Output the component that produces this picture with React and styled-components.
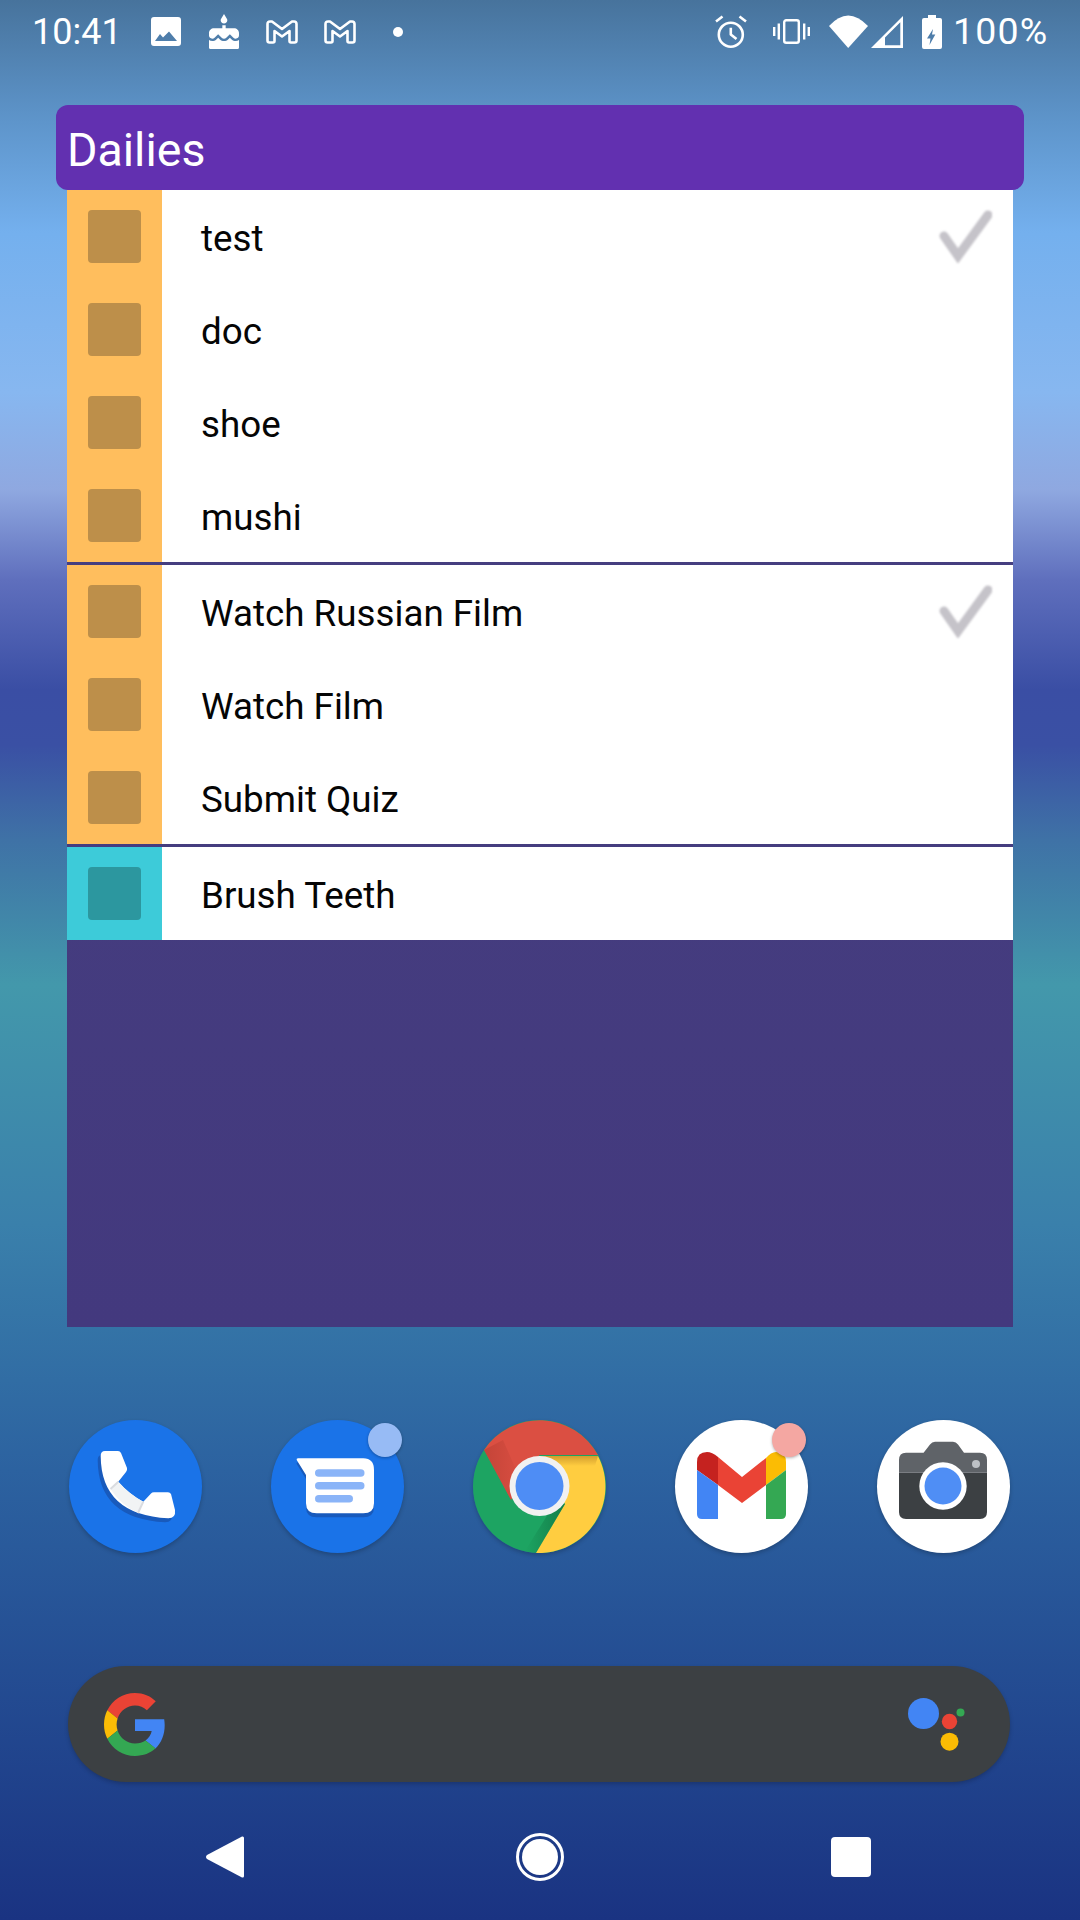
import styled, { createGlobalStyle } from "styled-components";

const GlobalStyle = createGlobalStyle`
  html, body {
    margin: 0;
    padding: 0;
  }
  body {
    font-family: Roboto, "Liberation Sans", sans-serif;
  }
`;

const Screen = styled.div`
  width: 1080px;
  height: 1920px;
  overflow: hidden;
  display: flex;
  flex-direction: column;
  background: linear-gradient(
    180deg,
    #47739c 0,
    #5e95cb 122px,
    #74b0ee 233px,
    #87b7f0 392px,
    #8fa8e0 490px,
    #5f6fbd 580px,
    #3a4ea4 690px,
    #3a50a4 745px,
    #3f72a6 840px,
    #4398ab 985px,
    #3a80ab 1224px,
    #2c62a0 1470px,
    #1a3382 1920px
  );
`;

const StatusBar = styled.div`
  height: 63px;
  padding: 0 33px 0 32px;
  display: flex;
  align-items: center;
  color: #fff;
`;

const StatusText = styled.span`
  font-size: ${(p) => p.$size}px;
  letter-spacing: ${(p) => p.$track || 0}px;
  margin-left: ${(p) => p.$gap || 0}px;
  width: ${(p) => p.$width}px;
  line-height: 1;
  white-space: nowrap;
`;

const StatusIcon = styled.svg`
  display: block;
  flex: none;
  fill: #fff;
  margin-left: ${(p) => p.$gap || 0}px;
`;

const LineIcon = styled(StatusIcon)`
  fill: none;
  stroke: #fff;
  stroke-width: 2.6;
  stroke-linejoin: round;
`;

const Spacer = styled.div`
  flex: 1;
`;

const Widget = styled.section`
  margin: 42px 56px 0;
`;

const WidgetHeader = styled.h1`
  margin: 0;
  height: 85px;
  padding: 4px 0 0 11px;
  box-sizing: border-box;
  display: flex;
  align-items: center;
  background: #6230b0;
  border-radius: 12px;
  color: #fff;
  font-size: 46.5px;
  font-weight: 400;
`;

const TaskPanel = styled.div`
  margin: 0 11px;
  height: 1137px;
  background: linear-gradient(180deg, #474180, #43397e);
`;

const TaskGroup = styled.ul`
  list-style: none;
  margin: 0 0 3px;
  padding: 0;
`;

const TaskRow = styled.li`
  height: 93px;
  display: flex;
  align-items: center;
  background: #fff;
`;

const Stripe = styled.div`
  width: 95px;
  height: 100%;
  flex: none;
  display: flex;
  align-items: center;
  padding-left: 21px;
  box-sizing: border-box;
  background: ${(p) => (p.$tone === "teal" ? "#3dcbd9" : "#ffbe5d")};
`;

const Box = styled.div`
  width: 53px;
  height: 53px;
  border-radius: 4px;
  background: ${(p) => (p.$tone === "teal" ? "#2c979f" : "#bd8f4a")};
`;

const TaskName = styled.span`
  margin-left: 39px;
  padding-top: 3px;
  flex: 1;
  font-size: 36.75px;
  color: #050505;
`;

const Check = styled.svg`
  width: 53px;
  height: 53px;
  margin-right: 21px;
  fill: none;
  stroke: #c5c3c9;
  stroke-width: 9;
  stroke-linecap: round;
  filter: blur(0.8px);
`;

const Dock = styled.div`
  margin: 93px 70px 0 69px;
  display: flex;
  justify-content: space-between;
`;

const AppIcon = styled.div`
  position: relative;
  width: 133px;
  height: 133px;
  border-radius: 50%;
  background: ${(p) => p.$bg};
  box-shadow: 0 2px 4px rgba(0, 0, 0, 0.22);

  svg {
    display: block;
  }
`;

const Badge = styled.span`
  position: absolute;
  top: 3px;
  right: 2px;
  width: 34px;
  height: 34px;
  border-radius: 50%;
  background: ${(p) => p.$color};
  box-shadow: 0 1px 3px rgba(0, 0, 0, 0.3);
`;

const SearchBar = styled.div`
  margin: 113px 70px 0 68px;
  height: 116px;
  padding: 0 44px 0 36px;
  display: flex;
  align-items: center;
  justify-content: space-between;
  border-radius: 58px;
  background: #3c4043;
  box-shadow: 0 2px 4px rgba(0, 0, 0, 0.2);
`;

const NavBar = styled.nav`
  margin-top: 12px;
  height: 126px;
  padding-left: 206px;
  display: flex;
  align-items: center;
`;

const HomeButton = styled.div`
  width: 48px;
  height: 48px;
  margin-left: 272px;
  box-sizing: border-box;
  border: 3px solid #fff;
  border-radius: 50%;
  padding: 3px;

  &::after {
    content: "";
    display: block;
    width: 100%;
    height: 100%;
    border-radius: 50%;
    background: #fff;
  }
`;

const RecentsButton = styled.div`
  width: 40px;
  height: 40px;
  margin-left: 267px;
  border-radius: 4px;
  background: #fff;
`;

const handset =
  "M36 31H49Q51 31 52 33L58 48Q58.5 50.5 57 52L49.3 61.7Q60 74 74.3 81.7L82 73.5Q83 72.3 85 72.3H99Q101 72.3 102 74L106 90Q107 98.3 99.3 98.3Q32 95 31.7 36Q31.7 31 36 31Z";

const PhoneGlyph = () => (
  <svg width="133" height="133" viewBox="0 0 133 133">
    <path d={handset} fill="#185abc" transform="translate(-3 4)" />
    <path d={handset} fill="#fff" />
    <path d="M41.5 69L49.3 61.7Q60 74 74.3 81.7L69 93Q52 85 41.5 69Z" fill="#f1f3f4" />
    <path d="M41.5 69L49.3 61.7M74.3 81.7L69 93" stroke="#dadce0" strokeWidth="2" />
  </svg>
);

const bubble =
  "M27 38.3H92.3Q103 38.3 103 50V83.3Q103 93.3 92.3 93.3H45.7Q35 93.3 35 83.3V55L25.7 40Q25.2 38.3 27 38.3Z";

const MessagesGlyph = () => (
  <svg width="133" height="133" viewBox="0 0 133 133">
    <path d={bubble} fill="#185abc" transform="translate(0 4)" />
    <path d={bubble} fill="#fff" />
    <g fill="#8ab4f8">
      <rect x="44" y="49.3" width="49.5" height="7.5" rx="3.75" />
      <rect x="44" y="62" width="49.5" height="7.5" rx="3.75" />
      <rect x="44" y="75" width="38" height="7.5" rx="3.75" />
    </g>
  </svg>
);

const ChromeGlyph = () => (
  <svg width="133" height="133" viewBox="0 0 133 133">
    <defs>
      <linearGradient id="redShade" x1="0" y1="0" x2="1" y2="0">
        <stop offset="0" stopColor="#8f2c22" stopOpacity="0.3" />
        <stop offset="1" stopColor="#8f2c22" stopOpacity="0" />
      </linearGradient>
      <linearGradient id="yellowShade" x1="0" y1="0" x2="0" y2="1">
        <stop offset="0" stopColor="#a8701c" stopOpacity="0.5" />
        <stop offset="1" stopColor="#a8701c" stopOpacity="0" />
      </linearGradient>
      <linearGradient id="greenShade" x1="1" y1="0" x2="0" y2="0">
        <stop offset="0" stopColor="#0b5f35" stopOpacity="0.55" />
        <stop offset="1" stopColor="#0b5f35" stopOpacity="0" />
      </linearGradient>
    </defs>
    <circle cx="66.5" cy="66.5" r="66.5" fill="#1da462" />
    <path d="M11 30A66.5 66.5 0 0 1 125 35H66.5L38 80Z" fill="#db4f42" />
    <path d="M66.5 36H125A66.5 66.5 0 0 1 63 133L92 84Z" fill="#ffcd40" />
    <path d="M11 30L38 80L52 70L30 20Z" fill="url(#redShade)" />
    <path d="M66.5 36H125L122 46H80Z" fill="url(#yellowShade)" />
    <path d="M92 84L63 133L52 131L80 86Z" fill="url(#greenShade)" />
    <circle cx="66.5" cy="66" r="30" fill="#f1f1f1" />
    <circle cx="66.5" cy="66" r="24" fill="#4e8df5" />
  </svg>
);

const GmailGlyph = () => (
  <svg width="133" height="133" viewBox="0 0 133 133">
    <path d="M43 37L67 57L91 38V65L67 83L43 65Z" fill="#ea4335" />
    <path d="M22 50V42Q22 32 32 32Q37 32 43 37V65Z" fill="#c5221f" />
    <path d="M91 38Q96 32 101 32Q111 32 111 42V50L91 65Z" fill="#fbbc04" />
    <path d="M22 50L43 65V99H27Q22 99 22 94Z" fill="#4285f4" />
    <path d="M91 65L111 50V94Q111 99 106 99H91Z" fill="#34a853" />
  </svg>
);

const CameraGlyph = () => (
  <svg width="133" height="133" viewBox="0 0 133 133">
    <path d="M22 52.7H110V92Q110 99 103 99H29Q22 99 22 92Z" fill="#3c4043" />
    <path
      d="M22 52.7V40Q22 32.7 29 32.7H46.6L53 24.5Q55 21.7 58 21.7H76Q79 21.7 81 24.5L87 32.7H103Q110 32.7 110 40V52.7Z"
      fill="#5f6368"
    />
    <circle cx="66" cy="66" r="23.7" fill="#fff" />
    <circle cx="66" cy="66" r="18.5" fill="#4f8ef5" />
    <circle cx="99" cy="44" r="4" fill="#bdc1c6" />
  </svg>
);

const GoogleLogo = () => (
  <svg width="62" height="63" viewBox="0 0 48 48" preserveAspectRatio="none">
    <path
      fill="#ea4335"
      d="M24 9.5c3.54 0 6.71 1.22 9.21 3.6l6.85-6.85C35.9 2.38 30.47 0 24 0 14.62 0 6.51 5.38 2.56 13.22l7.98 6.19C12.43 13.72 17.74 9.5 24 9.5z"
    />
    <path
      fill="#4285f4"
      d="M46.98 24.55c0-1.57-.15-3.09-.38-4.55H24v9.02h12.94c-.58 2.96-2.26 5.48-4.78 7.18l7.73 6c4.51-4.18 7.09-10.36 7.09-17.65z"
    />
    <path
      fill="#fbbc05"
      d="M10.53 28.59c-.5-1.45-.78-2.99-.78-4.59s.27-3.14.78-4.59l-7.98-6.19C.92 16.46 0 20.12 0 24c0 3.88.92 7.54 2.56 10.78l7.97-6.19z"
    />
    <path
      fill="#34a853"
      d="M24 48c6.48 0 11.93-2.13 15.89-5.81l-7.73-6c-2.15 1.45-4.92 2.3-8.16 2.3-6.26 0-11.57-4.22-13.47-9.91l-7.98 6.19C6.51 42.62 14.62 48 24 48z"
    />
  </svg>
);

const AssistantLogo = () => (
  <svg width="58" height="53" viewBox="0 0 58 53">
    <circle cx="15.5" cy="15.5" r="15.5" fill="#4285f4" />
    <circle cx="41.5" cy="23.5" r="7.7" fill="#ea4335" />
    <circle cx="41.5" cy="43.7" r="9" fill="#fbbc04" />
    <circle cx="52.5" cy="14.5" r="4" fill="#34a853" />
  </svg>
);

const GmailNotice = ({ gap }) => (
  <LineIcon $gap={gap} width="32" height="24" viewBox="0 0 32 24">
    <path d="M1.5 20.5V4Q1.5 1.5 4 1.5H6L16 9L26 1.5H28Q30.5 1.5 30.5 4V20.5Q30.5 22.5 28.5 22.5H25Q23.5 22.5 23.5 21V11L16 16.5L8.5 11V21Q8.5 22.5 7 22.5H3.5Q1.5 22.5 1.5 20.5Z" />
  </LineIcon>
);

const groups = [
  {
    tone: "orange",
    tasks: [
      { name: "test", done: true },
      { name: "doc" },
      { name: "shoe" },
      { name: "mushi" },
    ],
  },
  {
    tone: "orange",
    tasks: [
      { name: "Watch Russian Film", done: true },
      { name: "Watch Film" },
      { name: "Submit Quiz" },
    ],
  },
  { tone: "teal", tasks: [{ name: "Brush Teeth" }] },
];

export default function App() {
  return (
    <Screen>
      <GlobalStyle />
      <StatusBar>
        <StatusText $size={36} $width={87}>10:41</StatusText>
        <StatusIcon $gap={32} width="30" height="29" viewBox="0 0 30 29">
          <path
            fillRule="evenodd"
            d="M3 0H27Q30 0 30 3V26Q30 29 27 29H3Q0 29 0 26V3Q0 0 3 0ZM4 24L9 17L12 20.5L18 14.5L26 24Z"
          />
        </StatusIcon>
        <StatusIcon $gap={28} width="30" height="35" viewBox="3 0 18 22" preserveAspectRatio="none">
          <path d="M12 6c1.11 0 2-.9 2-2 0-.38-.1-.73-.29-1.03L12 0l-1.71 2.97c-.19.3-.29.65-.29 1.03 0 1.1.9 2 2 2zm4.6 9.99l-1.07-1.07-1.08 1.07c-1.3 1.3-3.58 1.31-4.89 0l-1.07-1.07-1.09 1.07C6.75 16.64 5.88 17 4.96 17c-.73 0-1.4-.23-1.96-.61V21c0 .55.45 1 1 1h16c.55 0 1-.45 1-1v-4.61c-.56.38-1.23.61-1.96.61-.92 0-1.79-.36-2.44-1.01zM18 9h-5V7h-2v2H6c-1.66 0-3 1.34-3 3v1.54c0 1.08.88 1.96 1.96 1.96.52 0 1.02-.2 1.38-.57l2.14-2.13 2.13 2.13c.74.74 2.03.74 2.77 0l2.14-2.13 2.13 2.13c.37.37.86.57 1.38.57 1.08 0 1.96-.88 1.96-1.96V12C21 10.34 19.66 9 18 9z" />
        </StatusIcon>
        <GmailNotice gap={27} />
        <GmailNotice gap={26} />
        <StatusIcon $gap={37} width="10" height="10" viewBox="0 0 10 10">
          <circle cx="5" cy="5" r="5" />
        </StatusIcon>
        <Spacer />
        <LineIcon width="32" height="33" viewBox="0 0 32 33">
          <circle cx="15.8" cy="19.7" r="12" />
          <path d="M15.8 12.7V19.5L21.5 24M1 6.5L7.5 1.5M24.5 1.5L31 6.5" />
        </LineIcon>
        <StatusIcon $gap={26} width="37" height="25" viewBox="0 0 37 25">
          <rect x="11.2" y="1.2" width="14.6" height="22.6" rx="2" fill="none" stroke="#fff" strokeWidth="2.4" />
          <rect x="0" y="8" width="2.4" height="9" />
          <rect x="4.6" y="4.5" width="2.4" height="16" />
          <rect x="30" y="4.5" width="2.4" height="16" />
          <rect x="34.6" y="8" width="2.4" height="9" />
        </StatusIcon>
        <StatusIcon $gap={19} width="39" height="33" viewBox="0 0 39 33">
          <path d="M0 11Q19 -10 39 11L19.2 33Z" />
        </StatusIcon>
        <StatusIcon $gap={3} width="32" height="32" viewBox="0 0 32 32">
          <path fillRule="evenodd" d="M0 32L32 0V32ZM14 21.5L29.3 6.2V29.3H14Z" />
        </StatusIcon>
        <StatusIcon $gap={19} width="20" height="34" viewBox="0 0 20 34">
          <path
            fillRule="evenodd"
            d="M6 0H14V3H18Q20 3 20 5V32Q20 34 18 34H2Q0 34 0 32V5Q0 3 2 3H6ZM11 14L5 23.5H8.5L7.5 30L13.3 19.5H10Z"
          />
        </StatusIcon>
        <StatusText $size={37.5} $track={1.2} $gap={11} $width={94}>100%</StatusText>
      </StatusBar>

      <Widget>
        <WidgetHeader>Dailies</WidgetHeader>
        <TaskPanel>
          {groups.map((group, i) => (
            <TaskGroup key={i}>
              {group.tasks.map((task) => (
                <TaskRow key={task.name}>
                  <Stripe $tone={group.tone}>
                    <Box $tone={group.tone} />
                  </Stripe>
                  <TaskName>{task.name}</TaskName>
                  {task.done && (
                    <Check viewBox="0 0 53 53">
                      <path d="M5 26L19 46L49 5" />
                    </Check>
                  )}
                </TaskRow>
              ))}
            </TaskGroup>
          ))}
        </TaskPanel>
      </Widget>

      <Dock>
        <AppIcon $bg="#1a73e8">
          <PhoneGlyph />
        </AppIcon>
        <AppIcon $bg="#1a73e8">
          <MessagesGlyph />
          <Badge $color="#97bbf5" />
        </AppIcon>
        <AppIcon $bg="transparent">
          <ChromeGlyph />
        </AppIcon>
        <AppIcon $bg="#fff">
          <GmailGlyph />
          <Badge $color="#f4a7a2" />
        </AppIcon>
        <AppIcon $bg="#fff">
          <CameraGlyph />
        </AppIcon>
      </Dock>

      <SearchBar>
        <GoogleLogo />
        <AssistantLogo />
      </SearchBar>

      <NavBar>
        <svg width="38" height="42" viewBox="0 0 38 42" fill="#fff">
          <path d="M36 0.5Q38 0 38 2V40Q38 42 36 41.5L1 23Q-1 21 1 19Z" />
        </svg>
        <HomeButton />
        <RecentsButton />
      </NavBar>
    </Screen>
  );
}
